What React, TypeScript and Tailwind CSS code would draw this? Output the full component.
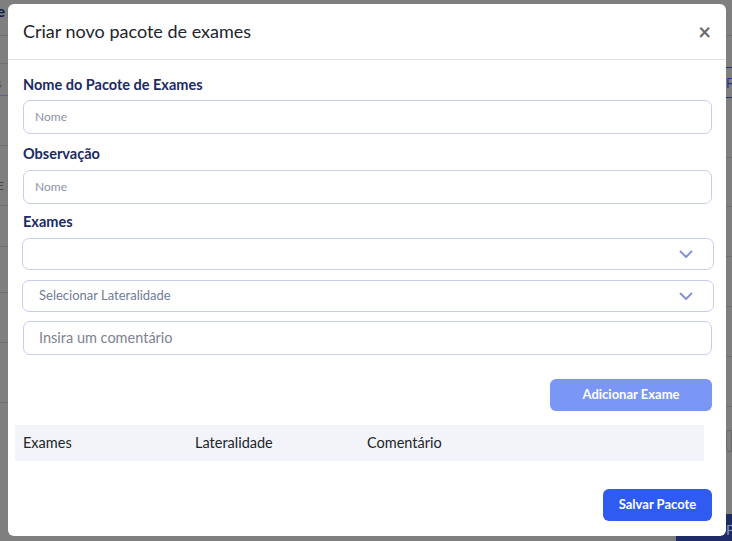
import React from "react";

const font = { fontFamily: "Lato, 'Open Sans', sans-serif" };

function Chevron() {
  return (
    <svg width="14" height="9" viewBox="0 0 14 9" fill="none">
      <path d="M1.5 1.5L7 7L12.5 1.5" stroke="#7f8ed6" strokeWidth="1.8" strokeLinecap="round" strokeLinejoin="round" />
    </svg>
  );
}

export default function App() {
  return (
    <div className="relative w-[732px] h-[541px] overflow-hidden bg-[#7f7f7f]" style={font}>
      {/* page behind the backdrop */}
      <div className="flex h-full w-full">
        <div className="w-[8px] flex flex-col">
          <div className="h-[36px] border-b border-[#6f6f6f] text-[#0d1a4a] font-bold text-[15px] leading-[22px] -ml-[3px]">e</div>
          <div className="h-[28px] border-b border-[#6f6f6f]" />
          <div className="h-[32px] border-b border-[#5c6486] text-[#5a5a5a] text-[13px] leading-[30px] -ml-[4px] pt-[4px]">s</div>
          <div className="h-[50px] border-b border-[#6f6f6f]" />
          <div className="h-[60px] border-b border-[#6f6f6f] text-[#4a4a4a] text-[12px] leading-[16px] pt-[32px] -ml-[3px]">E</div>
          <div className="h-[41px] border-b border-[#6f6f6f] text-[#4a4a4a] text-[12px] pt-[20px] -ml-[4px]">:</div>
          <div className="h-[46px] border-b border-[#6f6f6f]" />
          <div className="h-[50px] border-b border-[#6f6f6f]" />
          <div className="h-[60px] border-b border-[#6f6f6f]" />
        </div>
        <div className="flex-1" />
        <div className="w-[6px] flex flex-col">
          <div className="h-[36px] border-b border-[#6f6f6f]" />
          <div className="h-[32px] border-b border-[#27366e]" />
          <div className="h-[30px] border-b border-[#27366e] text-[#1e3a8a] text-[13px] leading-[30px]">F</div>
          <div className="h-[60px] border-b border-[#6f6f6f]" />
          <div className="h-[49px] border-b border-[#6f6f6f]" />
          <div className="h-[50px] border-b border-[#6f6f6f]" />
          <div className="h-[50px] border-b border-[#6f6f6f]" />
          <div className="h-[50px] border-b border-[#6f6f6f]" />
          <div className="h-[50px] border-b border-[#6f6f6f]" />
          <div className="h-[22px] mt-[23px] border border-[#6a6a6a] rounded-l-[3px]" />
          <div className="flex-1 mt-[62px] bg-[#1d2a66]" />
        </div>
      </div>
      <div className="absolute left-[676px] top-[515px] w-[60px] h-[30px] bg-[#1d2a66] text-[#8a93b8] text-[14px] leading-[30px] pl-[50px]">Pa</div>

      {/* modal */}
      <div className="absolute left-[8px] top-[4px] w-[718px] h-[532px] bg-white rounded-[6px] flex flex-col">
        <div className="h-[56px] border-b border-[#dee2e6] flex items-center justify-between pl-[15px] pr-[15px]">
          <div className="text-[18px] text-[#212529] leading-[24px] -mt-[1px]">Criar novo pacote de exames</div>
          <div className="text-[#6b6b6b] text-[22px] leading-[22px] font-bold">×</div>
        </div>
        <div className="flex flex-col px-[15px] pt-[15px]">
          <div className="text-[14.5px] leading-[20px] font-bold text-[#1b2a63]">Nome do Pacote de Exames</div>
          <div className="mt-[5px] h-[34px] w-[689px] border border-[#c9cdec] rounded-[7px] flex items-center pl-[11px] text-[12px] text-[#8b93a8]">Nome</div>
          <div className="mt-[10px] text-[14.5px] leading-[20px] font-bold text-[#1b2a63]">Observação</div>
          <div className="mt-[6px] h-[34px] w-[689px] border border-[#c9cdec] rounded-[7px] flex items-center pl-[11px] text-[12px] text-[#8b93a8]">Nome</div>
          <div className="mt-[8px] text-[14.5px] leading-[20px] font-bold text-[#1b2a63]">Exames</div>
          <div className="mt-[6px] -ml-[1px] h-[32px] w-[692px] border border-[#c9cdec] rounded-[7px] flex items-center justify-end pr-[20px]">
            <Chevron />
          </div>
          <div className="mt-[10px] -ml-[1px] h-[32px] w-[692px] border border-[#c9cdec] rounded-[7px] flex items-center justify-between pl-[16px] pr-[20px]">
            <span className="text-[13px] text-[#6f7c98]">Selecionar Lateralidade</span>
            <Chevron />
          </div>
          <div className="mt-[9px] h-[34px] w-[689px] border border-[#c9cdec] rounded-[7px] flex items-center pl-[15px] text-[14.5px] text-[#7b8294]">Insira um comentário</div>
          <div className="mt-[24px] flex justify-end w-[689px]">
            <div className="w-[162px] h-[32px] rounded-[6px] bg-[#7a97f6] text-white text-[13px] font-bold flex items-center justify-center">Adicionar Exame</div>
          </div>
          <div className="mt-[14px] -ml-[8px] w-[689px] h-[36px] bg-[#f3f4f9] flex items-center text-[14.5px] text-[#212529]">
            <div className="w-[180px] pl-[8px]">Exames</div>
            <div className="w-[172px]">Lateralidade</div>
            <div>Comentário</div>
          </div>
          <div className="mt-[28px] flex justify-end w-[689px]">
            <div className="w-[109px] h-[32px] rounded-[6px] bg-[#2f5bf1] text-white text-[13px] font-bold flex items-center justify-center">Salvar Pacote</div>
          </div>
        </div>
      </div>
    </div>
  );
}
